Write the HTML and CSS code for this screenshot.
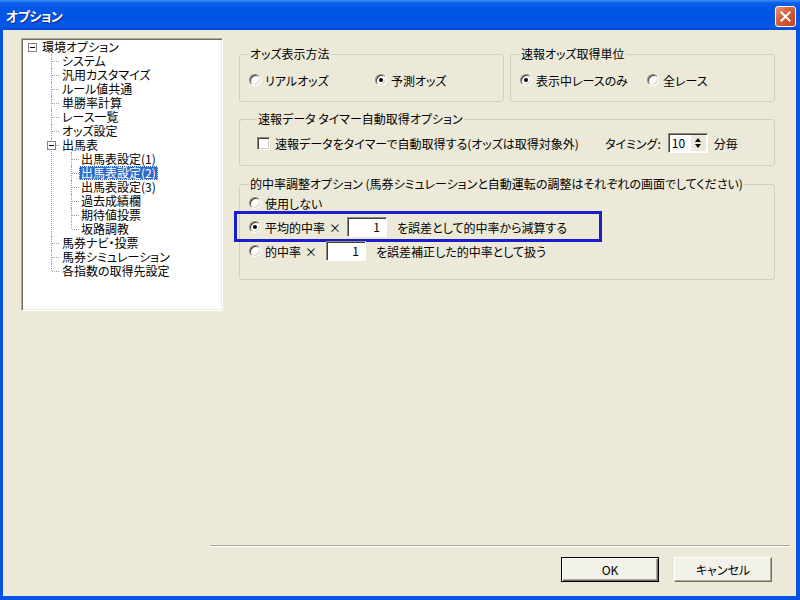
FILE: index.html
```html
<!DOCTYPE html>
<html lang="ja">
<head>
<meta charset="utf-8">
<title>オプション</title>
<link rel="stylesheet" href="styles.css">
</head>
<body>
<div class="window">
  <div class="titlebar">
    <span class="title">オプション</span>
    <span class="close"><svg width="13" height="13" viewBox="0 0 13 13"><path d="M2.5 2.5 L10.5 10.5 M10.5 2.5 L2.5 10.5" stroke="#fff" stroke-width="2" stroke-linecap="square"/></svg></span>
  </div>
  <div class="client">
    <div class="main">
      <div class="tree">
        <ul class="root">
          <li class="root-item">
            <div class="row"><span class="exp root-exp"></span><span class="label">環境オプション</span></div>
            <ul class="lvl1">
              <li><span class="label">システム</span></li>
              <li><span class="label">汎用カスタマイズ</span></li>
              <li><span class="label">ルール値共通</span></li>
              <li><span class="label">単勝率計算</span></li>
              <li><span class="label">レース一覧</span></li>
              <li><span class="label">オッズ設定</span></li>
              <li>
                <span class="exp child-exp"></span><span class="label">出馬表</span>
                <ul class="lvl2">
                  <li><span class="label">出馬表設定(1)</span></li>
                  <li><span class="label selected">出馬表設定(2)</span></li>
                  <li><span class="label">出馬表設定(3)</span></li>
                  <li><span class="label">過去成績欄</span></li>
                  <li><span class="label">期待値投票</span></li>
                  <li><span class="label">坂路調教</span></li>
                </ul>
              </li>
              <li><span class="label">馬券ナビ・投票</span></li>
              <li><span class="label">馬券シミュレーション</span></li>
              <li><span class="label">各指数の取得先設定</span></li>
            </ul>
          </li>
        </ul>
      </div>
      <div class="options">
        <div class="row-top">
          <fieldset class="group g-top">
            <legend>オッズ表示方法</legend>
            <div class="choices">
              <label class="radio w1"><span class="rb"></span>リアルオッズ</label>
              <label class="radio"><span class="rb on"></span>予測オッズ</label>
            </div>
          </fieldset>
          <fieldset class="group g-top">
            <legend>速報オッズ取得単位</legend>
            <div class="choices">
              <label class="radio w2"><span class="rb on"></span>表示中レースのみ</label>
              <label class="radio"><span class="rb"></span>全レース</label>
            </div>
          </fieldset>
        </div>
        <fieldset class="group g-timer">
          <legend>速報データ タイマー自動取得オプション</legend>
          <div class="timer-row">
            <label class="check"><span class="cb"></span>速報データをタイマーで自動取得する(オッズは取得対象外)</label>
            <span class="timing">タイミング:</span>
            <span class="spin"><span class="spin-val">10</span><span class="spin-btn"><span class="up"></span><span class="down"></span></span></span>
            <span class="unit">分毎</span>
          </div>
        </fieldset>
        <fieldset class="group g-adjust">
          <legend>的中率調整オプション (馬券シミュレーションと自動運転の調整はそれぞれの画面でしてください)</legend>
          <div class="adj-row">
            <label class="radio"><span class="rb"></span>使用しない</label>
          </div>
          <div class="adj-row marked">
            <span class="highlight"></span>
            <label class="radio"><span class="rb on"></span>平均的中率</label>
            <span class="times">×</span>
            <span class="num">1</span>
            <span class="after">を誤差として的中率から減算する</span>
          </div>
          <div class="adj-row">
            <label class="radio"><span class="rb"></span>的中率</label>
            <span class="times">×</span>
            <span class="num">1</span>
            <span class="after">を誤差補正した的中率として扱う</span>
          </div>
        </fieldset>
      </div>
    </div>
    <div class="footer">
      <div class="separator"></div>
      <div class="buttons">
        <button class="btn default">OK</button>
        <button class="btn">キャンセル</button>
      </div>
    </div>
  </div>
</div>
</body>
</html>
```

FILE: styles.css
```css
html, body {
  margin: 0;
  padding: 0;
}
body {
  width: 800px;
  height: 600px;
  overflow: hidden;
  font-family: "Noto Sans CJK JP", "DejaVu Sans", sans-serif;
  font-size: 12px;
  font-feature-settings: "palt";
  color: #000;
}
.window {
  width: 800px;
  height: 600px;
  display: flex;
  flex-direction: column;
  background: #0553e2;
  box-sizing: border-box;
}
.titlebar {
  height: 30px;
  flex: none;
  display: flex;
  align-items: center;
  justify-content: space-between;
  padding: 0 4px 0 6px;
  background: linear-gradient(#3d8df7 0px, #0a5fe9 3px, #0257e6 8px, #0154e4 60%, #0659e8 88%, #0449d4 100%);
}
.title {
  color: #fff;
  font-weight: bold;
  font-size: 13px;
  text-shadow: 1px 1px 0 #0a2a8c;
  letter-spacing: -0.5px;
}
.close {
  width: 21px;
  height: 21px;
  box-sizing: border-box;
  border: 1px solid #fff;
  border-radius: 3px;
  background: linear-gradient(135deg, #e89678 0%, #d8623e 40%, #c2401e 100%);
  display: flex;
  align-items: center;
  justify-content: center;
  margin-top: 2px;
}
.client {
  flex: 1;
  margin: 0 4px 4px 3px;
  background: #ece9d8;
  display: flex;
  flex-direction: column;
}
.main {
  flex: 1;
  display: flex;
  align-items: flex-start;
  padding: 8px 0 0 18px;
  gap: 16px;
}

/* tree */
.tree {
  width: 202px;
  height: 273px;
  box-sizing: border-box;
  background: #fff;
  border: 1px solid;
  border-color: #aca899 #fff #fff #aca899;
  box-shadow: inset 1px 1px 0 #716f64, inset -1px -1px 0 #f1efe2;
  padding: 1px 0 0 6px;
  overflow: hidden;
}
.tree ul {
  list-style: none;
  margin: 0;
  padding: 0;
}
.tree li {
  line-height: 14px;
}
.row {
  display: flex;
  align-items: center;
  height: 14px;
}
.label {
  display: inline-block;
  height: 14px;
  line-height: 14px;
  padding: 0 2px;
  white-space: nowrap;
  vertical-align: top;
}
.label.selected {
  background: #316ac5;
  color: #fff;
  outline: 1px dotted #e8e4c8;
  outline-offset: -1px;
}
.exp {
  width: 9px;
  height: 9px;
  box-sizing: border-box;
  border: 1px solid #848284;
  background: #fff;
  position: relative;
  display: inline-block;
}
.exp::after {
  content: "";
  position: absolute;
  left: 1px;
  top: 3px;
  width: 5px;
  height: 1px;
  background: #000;
}
.root-exp {
  margin-right: 3px;
}
.lvl1 {
  margin-left: 23px !important;
}
.lvl1 > li,
.lvl2 > li {
  position: relative;
  padding-left: 9px;
}
.lvl2 {
  margin-left: 11px !important;
}
.lvl2 > li {
  padding-left: 8px;
}
.lvl1 > li::before,
.lvl2 > li::before {
  content: "";
  position: absolute;
  left: 0;
  top: 0;
  bottom: 0;
  border-left: 1px dotted #a0a0a0;
}
.lvl1 > li:last-child::before,
.lvl2 > li:last-child::before {
  bottom: auto;
  height: 7px;
}
.lvl1 > li::after,
.lvl2 > li::after {
  content: "";
  position: absolute;
  left: 1px;
  top: 7px;
  width: 7px;
  border-top: 1px dotted #a0a0a0;
}
.child-exp {
  position: absolute;
  left: -4px;
  top: 3px;
  z-index: 1;
}

/* option groups */
.options {
  width: 536px;
  padding-top: 9px;
  display: flex;
  flex-direction: column;
}
.row-top {
  display: grid;
  grid-template-columns: 265px 265px;
  gap: 6px;
}
.group {
  margin: 0;
  padding: 0 9px;
  border: 1px solid #d0d0bf;
  border-radius: 3px;
  box-sizing: border-box;
  min-width: 0;
}
.group legend {
  padding: 0 1px;
  line-height: 14px;
  height: 14px;
  white-space: nowrap;
  color: #000;
}
.g-top {
  height: 55px;
}
.choices {
  display: flex;
  align-items: center;
  height: 14px;
  margin-top: 12px;
}
.radio, .check {
  display: inline-flex;
  align-items: center;
  white-space: nowrap;
  height: 14px;
}
.w1 { width: 126px; }
.w2 { width: 127px; }
.rb {
  width: 12px;
  height: 12px;
  box-sizing: border-box;
  border-radius: 50%;
  background: #fff;
  border: 1px solid;
  border-color: #8a8a80 #fff #fff #8a8a80;
  box-shadow: inset 1px 1px 0 #404040, inset -1px -1px 0 #d4d0c8;
  margin-right: 4px;
  position: relative;
  flex: none;
}
.rb.on::after {
  content: "";
  position: absolute;
  left: 3px;
  top: 3px;
  width: 4px;
  height: 4px;
  border-radius: 50%;
  background: #000;
}
.g-timer {
  margin-top: 10px;
  height: 54px;
  padding-left: 17px;
}
.timer-row {
  display: flex;
  align-items: center;
  height: 20px;
  margin-top: 7px;
}
.cb {
  width: 13px;
  height: 13px;
  box-sizing: border-box;
  background: #fff;
  border: 1px solid;
  border-color: #8a8a80 #fff #fff #8a8a80;
  box-shadow: inset 1px 1px 0 #404040, inset -1px -1px 0 #d4d0c8;
  margin-right: 5px;
  flex: none;
}
.timing {
  margin-left: 26px;
}
.spin {
  margin-left: 7px;
  width: 40px;
  height: 20px;
  box-sizing: border-box;
  background: #fff;
  border: 1px solid;
  border-color: #8a8a80 #fff #fff #8a8a80;
  box-shadow: inset 1px 1px 0 #404040;
  display: flex;
  align-items: center;
  justify-content: space-between;
  padding: 0 1px 0 3px;
}
.spin-val {
  line-height: 14px;
}
.spin-btn {
  width: 15px;
  height: 16px;
  background: #ece9d8;
  display: flex;
  flex-direction: column;
  justify-content: center;
  align-items: center;
  gap: 2px;
}
.up, .down {
  width: 0;
  height: 0;
  border-left: 3px solid transparent;
  border-right: 3px solid transparent;
}
.up { border-bottom: 4px solid #000; }
.down { border-top: 4px solid #000; }
.unit {
  margin-left: 6px;
}
.g-adjust {
  margin-top: 11px;
  height: 103px;
}
.adj-row {
  display: flex;
  align-items: center;
  height: 24px;
  position: relative;
}
.times {
  margin-left: 4px;
}
.marked .num {
  margin-left: 6px;
}
.num {
  margin-left: 9px;
  width: 40px;
  height: 20px;
  box-sizing: border-box;
  background: #fff;
  border: 1px solid;
  border-color: #8a8a80 #fff #fff #8a8a80;
  box-shadow: inset 1px 1px 0 #404040;
  text-align: right;
  padding-right: 6px;
  line-height: 17px;
}
.after {
  margin-left: 10px;
}
.highlight {
  position: absolute;
  left: -15px;
  top: -4px;
  width: 368px;
  height: 31px;
  box-sizing: border-box;
  border: 3px solid #1c1ccf;
  pointer-events: none;
}

/* footer */
.footer {
  flex: none;
}
.separator {
  margin: 0 6px 0 207px;
  border-top: 1px solid #aca899;
  border-bottom: 1px solid #fff;
}
.buttons {
  display: flex;
  justify-content: flex-end;
  gap: 15px;
  padding: 10px 24px 14px 0;
}
.btn {
  width: 98px;
  height: 25px;
  box-sizing: border-box;
  font-family: inherit;
  font-size: 12px;
  font-feature-settings: "palt";
  color: #000;
  background: #f3f2ea;
  border: 1px solid;
  border-color: #fff #716f64 #716f64 #fff;
  box-shadow: inset -1px -1px 0 #aca899;
  padding: 0;
}
.btn.default {
  border: 1px solid #000;
  box-shadow: inset 1px 1px 0 #fff, inset -1px -1px 0 #716f64, inset -2px -2px 0 #aca899;
}
```
